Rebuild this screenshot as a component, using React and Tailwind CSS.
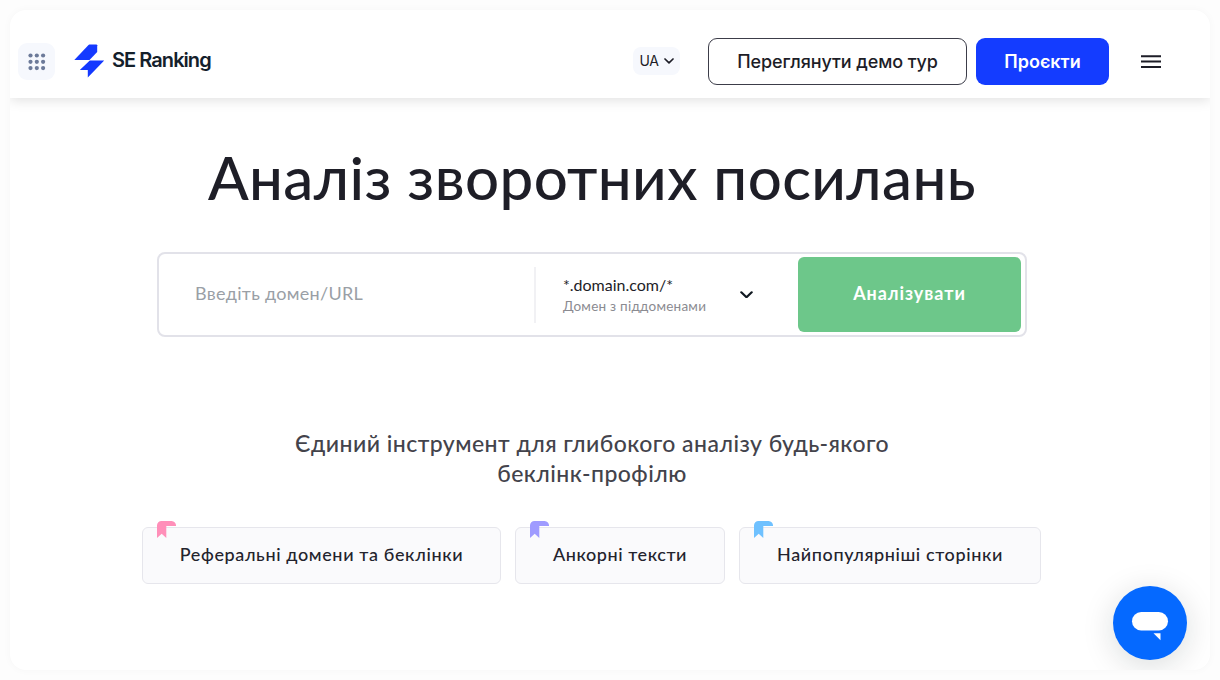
const features = [
    { label: 'Реферальні домени та беклінки', box: 'w-[359px]', color: 'text-[#ff8fb9]', text: 'tracking-[0.62px]' },
    { label: 'Анкорні тексти', box: 'w-[210px]', color: 'text-[#9f9bff]', text: 'tracking-[0.55px]' },
    { label: 'Найпопулярніші сторінки', box: 'w-[302px]', color: 'text-[#6fc1ff]', text: 'tracking-[0.6px]' },
];

const GridIcon = () => (
    <svg width="18" height="18" viewBox="0 0 18 18" fill="#6c7a99" className="mt-px">
        {[2.5, 8.8, 15.1].map((y) =>
            [2.5, 8.8, 15.1].map((x) => <circle key={`${x}-${y}`} cx={x} cy={y} r="2.1" />)
        )}
    </svg>
);

const Logo = () => (
    <svg width="31" height="34" viewBox="0 0 31 34" fill="#1439ff">
        <path d="M14.5 1 15.3 0.5H22.6L23.2 1.2V8L15.5 15.9H0.3z" />
        <path d="M15.8 16.6H30.2L13.8 33.4v-7.3H5.8z" />
    </svg>
);

const Chevron = ({ size, stroke, className }) => (
    <svg width={size} height={size * 0.6} viewBox="0 0 10 6" fill="none" stroke="currentColor" strokeWidth={stroke} strokeLinecap="round" strokeLinejoin="round" className={className}>
        <path d="M1 1l4 3.8L9 1" />
    </svg>
);

const Header = () => (
    <header className="flex h-[88px] shrink-0 items-center pl-2 pt-[14px] font-['Inter',sans-serif] shadow-[0_2px_12px_rgba(0,0,0,0.13)] [clip-path:inset(0_0_-16px_0)]">
        <button className="flex h-[37px] w-[37px] items-center justify-center rounded-[9px] bg-[#f6f8fd]">
            <GridIcon />
        </button>
        <a className="ml-[19px] flex items-center">
            <Logo />
            <span className="ml-[7px] -mt-[3px] text-xl leading-7 font-semibold tracking-[-0.95px] text-[#14202b]">SE Ranking</span>
        </a>
        <div className="ml-auto mr-[49px] flex items-center">
            <button className="mr-[28px] flex h-7 w-[47px] items-center justify-center gap-[5px] rounded-lg bg-[#f6f8fd] text-sm tracking-[-0.3px] text-[#1d1d27]">
                UA
                <Chevron size={10} stroke="1.7" />
            </button>
            <button className="mr-[9px] h-[47px] w-[259px] rounded-[9px] border border-[#3c3d49] text-[18px] font-medium tracking-[-0.1px] whitespace-nowrap text-[#1d1d27]">Переглянути демо тур</button>
            <button className="mr-8 h-[47px] w-[133px] rounded-[9px] bg-[#143cff] text-[18px] font-semibold text-white">Проєкти</button>
            <svg width="20" height="14" viewBox="0 0 20 14" fill="#1d1d27" className="mt-px">
                <path d="M0 0.3h20v2H0zM0 5.6h20v2H0zM0 10.9h20v2H0z" />
            </svg>
        </div>
    </header>
);

const SearchForm = () => (
    <form className="mt-[36px] ml-[147px] flex h-[85px] w-[870px] items-center rounded-lg border-2 border-[#e2e2e9] pr-[4px]">
        <div className="flex h-14 w-[377px] items-center border-r-2 border-[#f1f1f4] pb-[3px] pl-9 text-lg whitespace-nowrap text-[#9a9fa6]">
            <span className="tracking-[0.3px]">Введіть домен/URL</span>
        </div>
        <div className="flex h-14 flex-1 items-center pl-[27px] whitespace-nowrap">
            <div className="w-[177px]">
                <div className="text-base leading-[22px] text-[#1d1d27]">*.domain.com/*</div>
                <div className="text-[13.5px] leading-5 tracking-[0.25px] text-[#8b8b91]">Домен з піддоменами</div>
            </div>
            <Chevron size={13} stroke="1.7" className="text-[#101820]" />
        </div>
        <button className="h-[75px] w-[223px] rounded-md bg-[#6dc78a] pb-[3px] text-lg font-bold tracking-[0.95px] text-white">Аналізувати</button>
    </form>
);

const FeatureCard = ({ label, box, color, text }) => (
    <div className={`relative flex h-[57px] items-center justify-center rounded-md border border-[#e6e6ec] bg-[#fafafc] pb-[3px] ${box}`}>
        <svg width="19" height="17" viewBox="0 0 19 17" fill="currentColor" className={`absolute -top-[7px] left-[14px] ${color}`}>
            <path d="M0 17V4.5A4.5 4.5 0 0 1 4.5 0H14.5A4.5 4.5 0 0 1 19 5H9.3V17L4.7 12.8z" />
        </svg>
        <span className={`text-lg font-medium whitespace-nowrap text-[#23232d] ${text}`}>{label}</span>
    </div>
);

const ChatButton = () => (
    <button className="absolute right-[23px] bottom-[10px] h-[74px] w-[74px] rounded-full bg-[#0569ff] shadow-[0_6px_32px_rgba(0,30,30,0.15)]">
        <svg width="74" height="74" viewBox="0 0 74 74" fill="#fff">
            <rect x="19" y="26" width="36" height="18.5" rx="9.2" />
            <path d="M40.5 47.3h7v7z" />
        </svg>
    </button>
);

const App = () => (
    <div className="h-[680px] w-[1220px] bg-[#fdfdfd] p-[10px] font-['Lato','Noto_Sans',sans-serif]">
        <main className="relative flex h-[660px] flex-col overflow-hidden rounded-2xl bg-white shadow-[0_0_8px_rgba(0,0,0,0.03)]">
            <Header />
            <h1 className="mt-[40px] ml-[147px] w-[870px] text-center text-[60px] leading-[78px] font-medium tracking-[0.4px] whitespace-nowrap text-[#1e1e27]">
                Аналіз зворотних посилань
            </h1>
            <SearchForm />
            <h2 className="mt-[91px] ml-[147px] w-[870px] text-center text-[23px] leading-[30px] font-medium tracking-[0.46px] text-[#43434b]">
                Єдиний інструмент для глибокого аналізу будь-якого
                <br />
                беклінк-профілю
            </h2>
            <div className="mt-[39px] ml-[132px] flex gap-[14px]">
                {features.map((item) => (
                    <FeatureCard key={item.label} {...item} />
                ))}
            </div>
            <ChatButton />
        </main>
    </div>
);

export default App;
